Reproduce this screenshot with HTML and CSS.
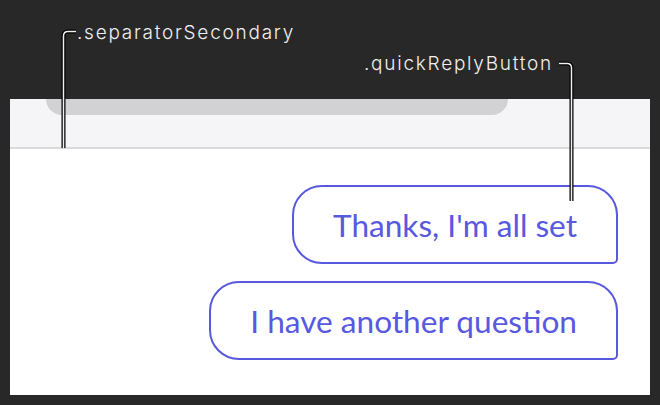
FILE: index.html
```html
<!DOCTYPE html>
<html>
<head>
<meta charset="utf-8">
<link rel="stylesheet" href="styles.css">
</head>
<body>
<div class="stage">
  <div class="panel">
    <div class="header">
      <div class="composer-tail"></div>
    </div>
    <div class="replies">
      <button class="quick-reply">Thanks, I'm all set</button>
      <button class="quick-reply">I have another question</button>
    </div>
  </div>
  <span class="label label-separator">.separatorSecondary</span>
  <span class="label label-quick">.quickReplyButton</span>
  <svg class="callouts" width="660" height="405" viewBox="0 0 660 405">
    <path class="callout-edge" d="M76 31.5 H68 Q63.5 31.5 63.5 36 V148"/>
    <path class="callout-core" d="M76 31.5 H68 Q63.5 31.5 63.5 36 V148"/>
    <path class="callout-edge" d="M559 63.5 H567 Q571.5 63.5 571.5 68 V201"/>
    <path class="callout-core" d="M559 63.5 H567 Q571.5 63.5 571.5 68 V201"/>
  </svg>
</div>
</body>
</html>
```
FILE: styles.css
```css
html, body {
  margin: 0;
  padding: 0;
  background: #282828;
}
.stage {
  position: relative;
  width: 660px;
  height: 405px;
  padding: 99px 10px 10px 10px;
  box-sizing: border-box;
}
.panel {
  width: 640px;
  height: 296px;
  background: #ffffff;
  display: flex;
  flex-direction: column;
}
.header {
  height: 48px;
  background: #f5f5f7;
  border-bottom: 2px solid #dadadc;
  flex: none;
}
.composer-tail {
  margin-left: 36px;
  width: 462px;
  height: 16px;
  background: #d2d2d4;
  border-radius: 0 0 18px 18px;
}
.replies {
  display: flex;
  flex-direction: column;
  align-items: flex-end;
  gap: 17px;
  padding: 36px 32px 0 0;
}
.quick-reply {
  height: 79px;
  box-sizing: border-box;
  padding: 2px 39px 0 39px;
  border: 2px solid #5858e0;
  border-radius: 30px 30px 5px 30px;
  background: #ffffff;
  color: #5858e0;
  font-family: Lato, "Noto Sans", sans-serif;
  font-size: 31.6px;
  line-height: 1;
}
.label {
  position: absolute;
  font-family: Inter, "Noto Sans", sans-serif;
  font-size: 19px;
  font-weight: 300;
  letter-spacing: 1.75px;
  color: #f0f0f0;
  line-height: 1;
  white-space: nowrap;
}
.label-separator {
  left: 77px;
  top: 23px;
}
.label-quick {
  left: 364px;
  top: 54px;
}
.callouts {
  position: absolute;
  left: 0;
  top: 0;
  pointer-events: none;
}
.callout-edge {
  fill: none;
  stroke: #000000;
  stroke-width: 4;
}
.callout-core {
  fill: none;
  stroke: #f0f0f0;
  stroke-width: 1.5;
}
```
